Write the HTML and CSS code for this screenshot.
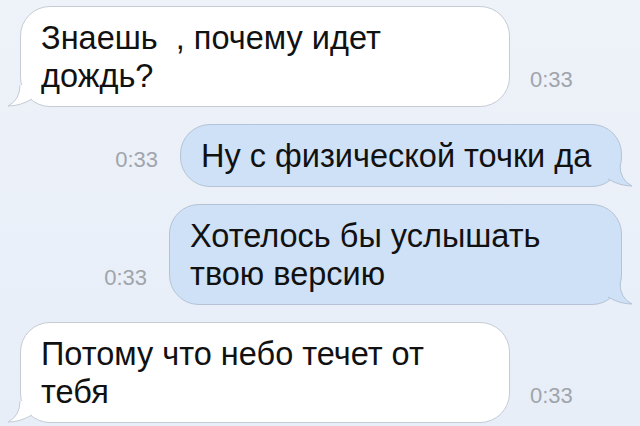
FILE: index.html
```html
<!DOCTYPE html>
<html>
<head>
    <meta charset="utf-8">
    <title>Сообщения</title>
    <link rel="stylesheet" href="styles.css">
</head>
<body>
    <div class="chat">
        <!-- incoming -->
        <div class="row in">
            <div class="bubble white wide">
                Знаешь &nbsp;, почему идет<br>дождь?
                <svg class="tail tail-left" width="26" height="22" viewBox="0 0 26 22">
                    <path d="M12 0 Q12 15 0 21 Q12 21 24 14 L24 0 Z" class="tail-fill"/>
                    <path d="M12 0 Q12 15 0 21 Q12 21 24 14" class="tail-line"/>
                </svg>
            </div>
            <span class="time">0:33</span>
        </div>

        <!-- outgoing -->
        <div class="row out">
            <span class="time">0:33</span>
            <div class="bubble blue mid">
                Ну с физической точки да
                <svg class="tail tail-right" width="26" height="22" viewBox="0 0 26 22">
                    <path d="M14 0 Q14 15 26 21 Q14 21 2 14 L2 0 Z" class="tail-fill"/>
                    <path d="M14 0 Q14 15 26 21 Q14 21 2 14" class="tail-line"/>
                </svg>
            </div>
        </div>

        <div class="row out">
            <span class="time">0:33</span>
            <div class="bubble blue big">
                Хотелось бы услышать<br>твою версию
                <svg class="tail tail-right" width="26" height="22" viewBox="0 0 26 22">
                    <path d="M14 0 Q14 15 26 21 Q14 21 2 14 L2 0 Z" class="tail-fill"/>
                    <path d="M14 0 Q14 15 26 21 Q14 21 2 14" class="tail-line"/>
                </svg>
            </div>
        </div>

        <!-- incoming -->
        <div class="row in">
            <div class="bubble white wide">
                Потому что небо течет от<br>тебя
                <svg class="tail tail-left" width="26" height="22" viewBox="0 0 26 22">
                    <path d="M12 0 Q12 15 0 21 Q12 21 24 14 L24 0 Z" class="tail-fill"/>
                    <path d="M12 0 Q12 15 0 21 Q12 21 24 14" class="tail-line"/>
                </svg>
            </div>
            <span class="time">0:33</span>
        </div>
    </div>
</body>
</html>
```

FILE: styles.css
```css
* {
    margin: 0;
    padding: 0;
    box-sizing: border-box;
}
body {
    font-family: 'Liberation Sans', Arial, sans-serif;
    background: linear-gradient(180deg, #eef2f9, #e7eef8);
    color: #111111;
    width: 640px;
    height: 426px;
    overflow: hidden;
}
.chat {
    display: flex;
    flex-direction: column;
    gap: 17px;
    padding: 6px 18px 0 20px;
}
.row {
    display: flex;
    align-items: flex-end;
    gap: 20px;
}
.row.out {
    justify-content: flex-end;
    gap: 22px;
}
.bubble {
    position: relative;
    font-size: 32.5px;
    line-height: 38px;
    padding: 12px 20px 11px 20px;
    border-radius: 30px;
    border: 1px solid #c6ccd4;
}
.bubble.white {
    background: #ffffff;
}
.bubble.blue {
    background: #cfe1f6;
    border-color: #b4c3d5;
}
.wide {
    width: 490px;
}
.mid {
    width: 442px;
}
.big {
    width: 453px;
}
.time {
    font-size: 22px;
    line-height: 22px;
    color: #a0a4ab;
    margin-bottom: 16px;
}
.tail {
    position: absolute;
    bottom: -1px;
}
.tail-left {
    left: -13px;
}
.tail-right {
    right: -11px;
}
.tail-line {
    fill: none;
    stroke: #c6ccd4;
    stroke-width: 1;
}
.white .tail-fill {
    fill: #ffffff;
}
.blue .tail-fill {
    fill: #cfe1f6;
}
.blue .tail-line {
    stroke: #b4c3d5;
}
```
